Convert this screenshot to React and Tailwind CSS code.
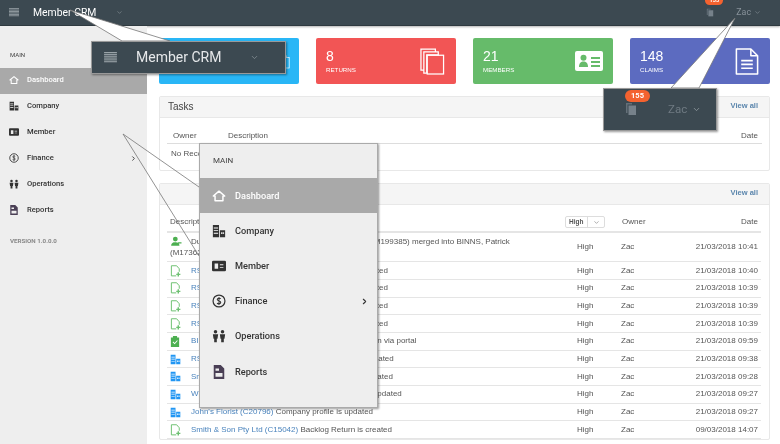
import React from 'react';
import { ChevronDown, ChevronRight } from 'lucide-react';

const HamburgerIcon = ({ className }) => (
    <svg viewBox="0 0 14 12" className={className} fill="currentColor">
        {[0, 2, 4, 6, 8, 10].map((y) => <rect key={y} x="0" y={y} width="14" height="1.2" />)}
    </svg>
);

const HomeIcon = ({ className }) => (
    <svg viewBox="0 0 16 16" className={className} fill="none" stroke="currentColor" strokeWidth="1.7" strokeLinejoin="round">
        <path d="M1.5 8 8 2.5 14.5 8H12.5v5.5h-9V8z" />
    </svg>
);

const CompanyIcon = ({ className }) => (
    <svg viewBox="0 0 16 16" className={className} fill="currentColor">
        <path d="M1 1h7v14H1zM9 7h6v8H9z" />
        <path d="M2 4h5v1H2zM2 7h5v1H2zM2 10h5v1H2zM10.500 9.500h1.500v2h-1.500zM12.800 9.500h1v2h-1z" fill="#fff" />
    </svg>
);

const MemberIcon = ({ className }) => (
    <svg viewBox="0 0 16 12" className={className} fill="currentColor">
        <path fillRule="evenodd" d="M1.500 0h13A1.500 1.500 0 0 1 16 1.500v9a1.500 1.500 0 0 1-1.500 1.500h-13A1.500 1.500 0 0 1 0 10.500v-9A1.500 1.500 0 0 1 1.500 0zM3 3v6h4V3zm6 1v1h4V4zm0 3v1h4V7z" />
    </svg>
);

const FinanceIcon = ({ className }) => (
    <svg viewBox="0 0 16 16" className={className} fill="none" stroke="currentColor">
        <circle cx="8" cy="8" r="6.800" strokeWidth="1.400" />
        <path d="M10 5.500C9.500 4.500 6 4.300 6 6.200c0 2 4 1.300 4 3.500 0 1.900-3.500 1.800-4.200.700M8 3.500v9" strokeWidth="1.200" />
    </svg>
);

const OperationsIcon = ({ className }) => (
    <svg viewBox="0 0 16 16" className={className} fill="currentColor">
        <circle cx="4" cy="3" r="2" />
        <circle cx="12" cy="3" r="2" />
        <path d="M1 6h6l-.7 5H5.500v4h-3v-4H1.700zM9 6h6l-.7 5h-.8v4h-3v-4h-.8z" />
    </svg>
);

const ReportsIcon = ({ className }) => (
    <svg viewBox="0 0 14 16" className={className} fill="currentColor">
        <path fillRule="evenodd" d="M1 0h8l4 4v12H1zM3 9v4.500h8V9zm0-5v2.500h4V4z" />
    </svg>
);

const FileIcon = ({ className }) => (
    <svg viewBox="0 0 14 16" className={className} fill="none" stroke="currentColor" strokeWidth="1.300" strokeLinejoin="round">
        <path d="M8 14.500H1.500V1h7l3.500 4v4" />
        <path d="M8 12.500h5.500M10.700 9.800v5.500" strokeWidth="1.900" />
    </svg>
);

const MergeIcon = ({ className }) => (
    <svg viewBox="0 0 16 16" className={className} fill="currentColor">
        <circle cx="7" cy="4.500" r="3.500" />
        <path d="M1 14c0-4 3-5 6-5s6 1 6 5zM11 9h5v2h-5z" />
    </svg>
);

const CheckIcon = ({ className }) => (
    <svg viewBox="0 0 14 16" className={className} fill="currentColor">
        <path fillRule="evenodd" d="M1 2h3V0h6v2h3v14H1zm2.500 7 3 3 4.500-5-1-1-3.500 4L4.500 8z" />
    </svg>
);

const CopiesIcon = ({ className }) => (
    <svg viewBox="0 0 26 28" className={className} fill="none" stroke="currentColor" strokeWidth="1.300">
        <path d="M1 1h15v3H4v19H1zM4 4h15v3H7v19H4z" />
        <rect x="7.500" y="7.500" width="17" height="19.500" />
    </svg>
);

const NotifyIcon = ({ className }) => (
    <svg viewBox="0 0 12 14" className={className} fill="currentColor">
        <path d="M1 1h6v1.500H2.500V11H1z" opacity="0.7" />
        <path d="M3.500 3.500h7.500V13H3.500z" />
    </svg>
);

const IdCardIcon = ({ className }) => (
    <svg viewBox="0 0 28 20" className={className}>
        <rect width="28" height="20" rx="2" fill="#fff" />
        <circle cx="8.500" cy="6.800" r="3" fill="#66bb6a" />
        <path d="M4 16c0-4 2-5.500 4.500-5.500S13 12 13 16z" fill="#66bb6a" />
        <path d="M16 6h9v2h-9zM16 10h9v2h-9zM16 14h9v2h-9z" fill="#66bb6a" />
    </svg>
);

const DocIcon = ({ className }) => (
    <svg viewBox="0 0 24 28" className={className} fill="none" stroke="currentColor" strokeWidth="1.600" strokeLinejoin="round">
        <path d="M1 1h15l7 7v19H1z" />
        <path d="M16 1v7h7" />
        <path d="M6 13h12M6 17h12M6 21h12" strokeWidth="1.800" />
    </svg>
);

const NAV = [
    { label: 'Dashboard', Icon: HomeIcon, active: true },
    { label: 'Company', Icon: CompanyIcon },
    { label: 'Member', Icon: MemberIcon },
    { label: 'Finance', Icon: FinanceIcon, arrow: true },
    { label: 'Operations', Icon: OperationsIcon },
    { label: 'Reports', Icon: ReportsIcon, tint: 'text-[#4a3f55]' },
];

const ROWS = [
    { icon: 'file', link: 'RSM Smith Pty Ltd (C14521)', text: ' Backlog Return is created', date: '21/03/2018 10:40' },
    { icon: 'file', link: 'RSM Smith Pty Ltd (C14521)', text: ' Backlog Return is created', date: '21/03/2018 10:39' },
    { icon: 'file', link: 'RSM Smith Pty Ltd (C14521)', text: ' Backlog Return is created', date: '21/03/2018 10:39' },
    { icon: 'file', link: 'RSM Smith Pty Ltd (C14521)', text: ' Backlog Return is created', date: '21/03/2018 10:39' },
    { icon: 'check', link: 'BINNS, Patrick (M17362)', text: ' Claim Application lodged on via portal', date: '21/03/2018 09:59' },
    { icon: 'company', link: 'RSM Smith Pty Ltd (C14521)', text: ' Company profile is updated', date: '21/03/2018 09:38' },
    { icon: 'company', link: 'Smith Brothers Pty (C20415)', text: ' Company profile is updated', date: '21/03/2018 09:28' },
    { icon: 'company', link: 'Wilson Group Pty Ltd (C18832)', text: ' Company profile is updated', date: '21/03/2018 09:27' },
    { icon: 'company', link: "John's Florist (C20796)", text: ' Company profile is updated', date: '21/03/2018 09:27' },
    { icon: 'file', link: 'Smith & Son Pty Ltd (C15042)', text: ' Backlog Return is created', date: '09/03/2018 14:07' },
];

const RowIcon = ({ type }) => {
    if (type === 'check') return <CheckIcon className="w-[10px] h-[11px] text-[#4caf50]" />;
    if (type === 'company') return <CompanyIcon className="w-[11px] h-[11px] text-[#2196f3]" />;
    return <FileIcon className="w-[11px] h-[12px] text-[#6cc070]" />;
};

const StatCard = ({ value, label, color, children }) => (
    <div className={`flex-1 h-[46px] rounded-[2px] flex items-center justify-between pl-[10px] pr-[11px] text-white ${color}`}>
        <div className="flex flex-col">
            <span className="text-[14px] leading-[18px]">{value}</span>
            <span className="text-[6.200px] leading-[10px] font-medium">{label}</span>
        </div>
        {children}
    </div>
);

const ViewAll = () => <span className="text-[7.500px] font-bold text-[#5b86ad]">View all</span>;

const TasksPanel = () => (
    <section className="border border-[#e8e8e8] rounded-[2px] h-[75px]">
        <div className="h-[21px] pb-[2px] flex items-center justify-between pl-[8px] pr-[11px] bg-[#f5f5f5] border-b border-[#e8e8e8]">
            <span className="text-[10px] text-[#444]">Tasks</span>
            <ViewAll />
        </div>
        <div className="px-[7px] pt-[10px] text-[8px] text-[#555]">
            <div className="h-[16px] flex items-center border-b border-[#ddd] pl-[5px] pr-[4px]">
                <span className="w-[56px] pl-[1px]">Owner</span>
                <span>Description</span>
                <span className="ml-auto">Date</span>
            </div>
            <div className="h-[20px] flex items-center pl-[4px]">No Records</div>
        </div>
    </section>
);

const ActivityPanel = () => (
    <section className="border border-[#e8e8e8] rounded-[2px]">
        <div className="h-[21px] pb-[2px] flex items-center justify-end pr-[11px] bg-[#f5f5f5] border-b border-[#e8e8e8]">
            <ViewAll />
        </div>
        <div className="pl-[7px] pr-[8px] text-[8px] text-[#555]">
            <div className="h-[28px] pt-[8px] pr-[3px] flex items-center border-b-2 border-[#e5e5e5]">
                <span className="flex-1 pl-[3px]">Description</span>
                <span className="w-[40px] h-[12px] mr-[17px] flex items-center border border-[#ddd] rounded-[2px] text-[6.500px] font-bold">
                    <span className="pl-[3px] w-[22px] border-r border-[#ddd] leading-[10px]">High</span>
                    <ChevronDown className="w-[7px] h-[7px] ml-[5px] text-[#777]" />
                </span>
                <span className="w-[91px]">Owner</span>
                <span className="w-[45px] text-right">Date</span>
            </div>
            <div className="h-[29.300px] pr-[3px] flex items-center border-b border-[#e5e5e5]">
                <div className="flex-1 pl-[3px] leading-[11px] whitespace-nowrap overflow-hidden">
                    <MergeIcon className="inline-block w-[12px] h-[11px] mr-[9px] text-[#4caf50] align-top" />
                    <span>Duplicate member entry SMITHSON, Patrick John (M199385) merged into BINNS, Patrick</span>
                    <br />
                    (M17362)
                </div>
                <span className="w-[44px]">High</span>
                <span className="w-[73px]">Zac</span>
                <span className="w-[64px] text-right whitespace-nowrap">21/03/2018 10:41</span>
            </div>
            {ROWS.map((row, index) => (
                <div key={index} className="h-[17.700px] pr-[3px] flex items-center border-b border-[#e5e5e5]">
                    <span className="w-[24px] pl-[3px] flex items-center"><RowIcon type={row.icon} /></span>
                    <div className="flex-1 whitespace-nowrap">
                        <span className="text-[#4b84bd]">{row.link}</span>{row.text}
                    </div>
                    <span className="w-[44px]">High</span>
                    <span className="w-[73px]">Zac</span>
                    <span className="w-[64px] text-right whitespace-nowrap">{row.date}</span>
                </div>
            ))}
        </div>
    </section>
);

const App = () => (
    <div className="relative w-[780px] h-[444px] overflow-hidden bg-white blur-[0.3px] font-['Liberation_Sans',Arial,sans-serif]">
        <header className="h-[26px] bg-[#3c4951] border-b border-[#2f3a40] flex items-center text-white font-['Roboto',sans-serif] shadow-[0_1px_2px_rgba(0,0,0,0.3)]">
            <HamburgerIcon className="ml-[9px] w-[10px] h-[9px] text-[#9aa3a8]" />
            <span className="ml-[14px] text-[10.400px]">Member CRM</span>
            <ChevronDown className="ml-[20px] w-[7px] h-[7px] text-[#8a949a]" />
            <div className="relative ml-auto mr-[19px] flex items-center">
                <span className="absolute left-[-1px] top-[-10px] w-[18px] h-[9px] rounded-full bg-[#f4622f] text-[5.500px] font-bold leading-[9px] text-center">155</span>
                <NotifyIcon className="w-[8px] h-[9px] text-[#76818a]" />
                <span className="ml-[22px] text-[8.800px] text-[#88929a]">Zac</span>
                <ChevronDown className="ml-[3px] w-[7px] h-[7px] text-[#88929a]" />
            </div>
        </header>

        <div className="flex h-[418px]">
            <aside className="w-[147px] shrink-0 bg-[#eeeeee] font-['Roboto',sans-serif] text-[#333]">
                <div className="pl-[10px] pt-[25px] h-[42px] text-[6px] leading-[8px] text-[#444]">MAIN</div>
                {NAV.map(({ label, Icon, active, arrow, tint }) => (
                    <div key={label} className={`h-[26px] flex items-center pb-[2px] pl-[9px] pr-[10px] text-[7.600px] font-medium ${active ? 'bg-[#a9a9a9] text-white' : ''}`}>
                        <span className={`w-[18px] flex items-center ${tint || ''}`}><Icon className="w-[10px] h-[10px]" /></span>
                        {label}
                        {arrow && <ChevronRight className="ml-auto w-[7px] h-[7px]" strokeWidth={3} />}
                    </div>
                ))}
                <div className="pl-[10px] pt-[13px] text-[6.200px] font-bold text-[#888]">VERSION 1.0.0.0</div>
            </aside>

            <main className="flex-1 pl-[12px] pr-[10px] pt-[12px] flex flex-col">
                <div className="flex gap-[17px]">
                    <StatCard value="12" label="TASKS" color="bg-[#29b6f6]">
                        <CopiesIcon className="w-[14px] h-[24px] -mr-[2px]" />
                    </StatCard>
                    <StatCard value="8" label="RETURNS" color="bg-[#f25555]">
                        <CopiesIcon className="w-[25px] h-[27px]" />
                    </StatCard>
                    <StatCard value="21" label="MEMBERS" color="bg-[#66bb6a]">
                        <IdCardIcon className="w-[28px] h-[20px] -mr-[1px]" />
                    </StatCard>
                    <StatCard value="148" label="CLAIMS" color="bg-[#5c6bc0]">
                        <DocIcon className="w-[24px] h-[27px]" />
                    </StatCard>
                </div>
                <div className="mt-[12px] flex flex-col gap-[12px]">
                    <TasksPanel />
                    <ActivityPanel />
                </div>
            </main>
        </div>

        {/* callout pointers */}
        <svg className="absolute inset-0 w-[780px] h-[444px] pointer-events-none" viewBox="0 0 780 444">
            <path d="M70 10 122 41H170z" fill="#fff" stroke="#777" strokeWidth="0.800" />
            <path d="M735 18 671 88H699z" fill="#fff" stroke="#777" strokeWidth="0.800" />
            <path d="M199 187 123 134 199 256" fill="none" stroke="#777" strokeWidth="0.800" />
        </svg>

        {/* zoomed header left */}
        <div className="absolute left-[91px] top-[41px] w-[195px] h-[33px] bg-[#3c4951] border border-[#999] shadow-[1px_1px_2px_rgba(0,0,0,0.4)] flex items-center text-white font-['Roboto',sans-serif]">
            <HamburgerIcon className="ml-[12px] w-[13px] h-[11px] text-[#9aa3a8]" />
            <span className="ml-[19px] text-[14px] text-[#e6e8ea]">Member CRM</span>
            <ChevronDown className="ml-[29px] w-[9px] h-[9px] text-[#8a949a]" />
        </div>

        {/* zoomed header right */}
        <div className="absolute left-[603px] top-[88px] w-[114px] h-[43px] bg-[#3c4951] border border-[#999] shadow-[1px_1px_2px_rgba(0,0,0,0.4)] font-['Roboto',sans-serif]">
            <span className="absolute left-[21px] top-[1px] w-[25px] h-[12px] rounded-full bg-[#f4622f] text-white text-[7.500px] font-bold leading-[12px] text-center">155</span>
            <NotifyIcon className="absolute left-[21px] top-[13px] w-[12px] h-[14px] text-[#76818a]" />
            <span className="absolute left-[64px] top-[12px] text-[11.500px] text-[#6f7a82]">Zac</span>
            <ChevronDown className="absolute left-[88px] top-[16px] w-[9px] h-[9px] text-[#98a1a7]" />
        </div>

        {/* zoomed sidebar */}
        <div className="absolute left-[199px] top-[143px] w-[179px] h-[265px] bg-[#eeeeee] border border-[#aaa] shadow-[1px_1px_2px_rgba(0,0,0,0.4)] font-['Roboto',sans-serif] text-[#333]">
            <div className="pl-[13px] pt-[12px] h-[34px] text-[8px] leading-[10px] text-[#444]">MAIN</div>
            {NAV.map(({ label, Icon, active, arrow, tint }) => (
                <div key={label} className={`h-[35.200px] flex items-center pl-[12px] pr-[8px] text-[9.200px] font-medium ${active ? 'bg-[#a9a9a9] text-white' : ''}`}>
                    <span className={`w-[23px] flex items-center ${tint || ''}`}><Icon className="w-[14px] h-[14px]" /></span>
                    {label}
                    {arrow && <ChevronRight className="ml-auto w-[9px] h-[9px]" strokeWidth={3} />}
                </div>
            ))}
        </div>
    </div>
);

export default App;
